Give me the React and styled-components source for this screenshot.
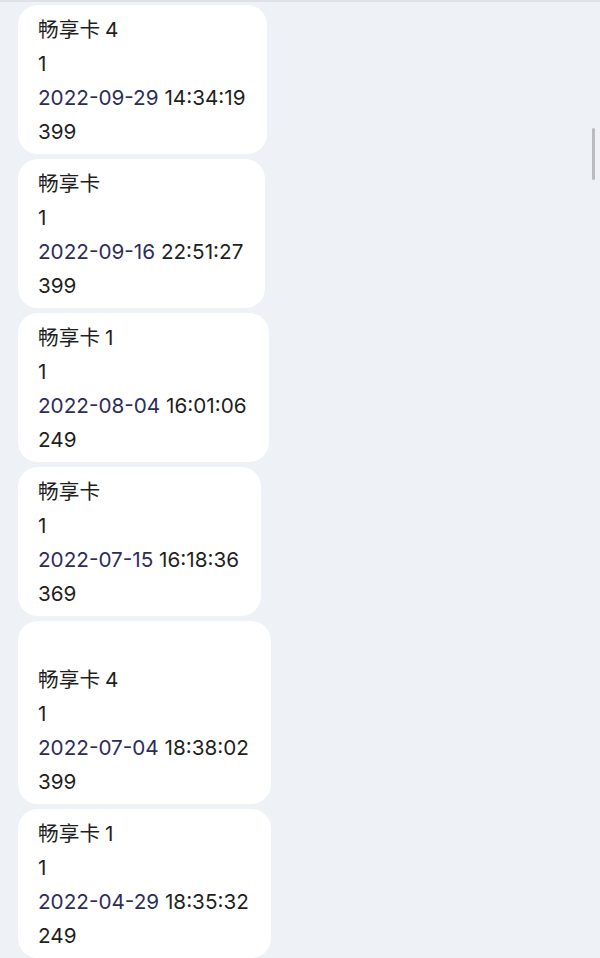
import React from "react";
import styled, { createGlobalStyle } from "styled-components";

const records = [
  { name: "畅享卡", num: "4", count: 1, date: "2022-09-29", time: "14:34:19", price: 399 },
  { name: "畅享卡", num: "", count: 1, date: "2022-09-16", time: "22:51:27", price: 399 },
  { name: "畅享卡", num: "1", count: 1, date: "2022-08-04", time: "16:01:06", price: 249 },
  { name: "畅享卡", num: "", count: 1, date: "2022-07-15", time: "16:18:36", price: 369 },
  { name: "畅享卡", num: "4", count: 1, date: "2022-07-04", time: "18:38:02", price: 399, blank: true },
  { name: "畅享卡", num: "1", count: 1, date: "2022-04-29", time: "18:35:32", price: 249 },
];

const GlobalStyle = createGlobalStyle`
  html, body {
    margin: 0;
    padding: 0;
    background: #eef1f5;
  }
  body {
    font-family: "Inter", "Noto Sans CJK SC", sans-serif;
    overflow: hidden;
  }
`;

const Page = styled.div`
  position: relative;
  height: 958px;
  box-sizing: border-box;
  border-top: 2px solid #dfe1e4;
  padding: 3px 0 0 18px;
  display: flex;
  flex-direction: column;
  align-items: flex-start;
  gap: 5px;
  overflow: hidden;
`;

const Card = styled.div`
  background: #ffffff;
  border-radius: 20px;
  padding: ${(p) => (p.blank ? "42px" : "8px")} 22px 5px 20px;
  font-size: 20.7px;
  line-height: 34px;
  color: #1f1f22;
  flex-shrink: 0;
`;

const Line = styled.div`
  white-space: nowrap;
`;

const Num = styled.span`
  margin-left: 5px;
`;

const DateText = styled.span`
  color: #2d2d5c;
`;

const Scrollbar = styled.div`
  position: absolute;
  right: 5px;
  top: 126px;
  width: 3px;
  height: 52px;
  border-radius: 2px;
  background: #b9bbbe;
`;

const App = () => {
  return (
    <>
      <GlobalStyle />
      <Page>
        {records.map((r, i) => (
          <Card key={i} blank={r.blank}>
            <Line>
              {r.name}
              {r.num && <Num>{r.num}</Num>}
            </Line>
            <Line>{r.count}</Line>
            <Line>
              <DateText>{r.date}</DateText> {r.time}
            </Line>
            <Line>{r.price}</Line>
          </Card>
        ))}
        <Scrollbar />
      </Page>
    </>
  );
};

export default App;
